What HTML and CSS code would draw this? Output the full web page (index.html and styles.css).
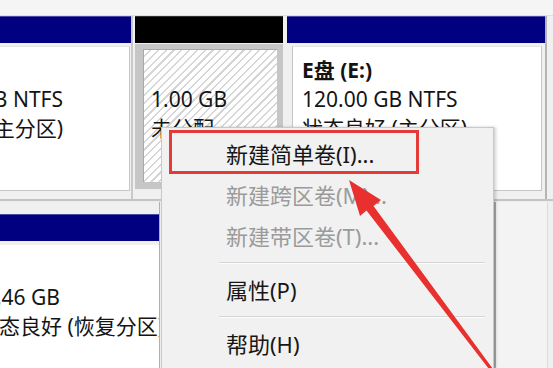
FILE: index.html
```html
<!DOCTYPE html>
<html lang="zh-CN">
<head>
    <meta charset="UTF-8">
    <title>磁盘管理</title>
    <link rel="stylesheet" href="styles.css">
</head>
<body>

    <div class="strip"></div>

    <!-- disk 0 -->
    <section class="row row-top">
        <div class="vol vol-a">
            <div class="bar navy"></div>
            <div class="box">
                <p class="line"></p>
                <p class="line cut">59.45 GB NTFS</p>
                <p class="line cut">状态良好 (主分区)</p>
            </div>
        </div>
        <div class="vol vol-b">
            <div class="bar black"></div>
            <div class="frame">
                <div class="hatch">
                    <p class="line">1.00 GB</p>
                    <p class="line">未分配</p>
                </div>
            </div>
        </div>
        <div class="vol vol-c">
            <div class="bar navy"></div>
            <div class="box">
                <p class="line bold">E盘 (E:)</p>
                <p class="line">120.00 GB NTFS</p>
                <p class="line">状态良好 (主分区)</p>
            </div>
        </div>
        <div class="vol-end"></div>
    </section>

    <!-- disk 1 -->
    <section class="row row-bot">
        <div class="vol vol-d">
            <div class="bar navy"></div>
            <div class="box">
                <p class="line cut-end">1.46 GB</p>
                <p class="line shift">状态良好 (恢复分区)</p>
            </div>
        </div>
        <div class="vol vol-e"></div>
        <div class="vol vol-f"></div>
    </section>

    <!-- context menu -->
    <div class="menu">
        <div class="menu-item">新建简单卷(I)...</div>
        <div class="menu-item off">新建跨区卷(M)...</div>
        <div class="menu-item off">新建带区卷(T)...</div>
        <div class="sep"></div>
        <div class="menu-item">属性(P)</div>
        <div class="sep"></div>
        <div class="menu-item">帮助(H)</div>
    </div>

    <!-- annotation -->
    <div class="mark"></div>
    <svg class="arrow" width="553" height="368" viewBox="0 0 553 368">
        <polygon points="349,180 381,200 373.5,206 493,369 490.5,371 366.5,210.5 360,216" fill="#e8312e"/>
    </svg>

</body>
</html>
```

FILE: styles.css
```css
body {
    margin: 0;
    width: 553px;
    height: 368px;
    overflow: hidden;
    position: relative;
    background-color: #f0f0f0;
    font-family: "Noto Sans", "Noto Sans CJK SC", sans-serif;
    color: #141414;
}

p {
    margin: 0;
}

.strip {
    height: 15px;
    background-color: #f5f5f5;
    border-bottom: 1px solid #e0e0e0;
}

.row {
    display: flex;
}

.row-top {
    height: 183px;
    border-bottom: 2px solid #c4c4c4;
}

.bar {
    height: 26px;
    border-top: 1px solid #4b4ba6;
}

.navy {
    background-color: #000080;
}

.black {
    background-color: #000;
    border-top-color: #333;
}

.line {
    height: 29px;
    line-height: 29px;
    font-size: 21px;
    white-space: nowrap;
}

.bold {
    font-weight: bold;
}

.box {
    background-color: #fff;
    border: 1px solid #c6c6c6;
    border-top-color: #e4e4e4;
}

/* disk 0 */

.vol-a {
    width: 131px;
    border-right: 2px solid #c9c9c9;
}

.vol-a .box {
    margin-top: 3px;
    height: 134px;
    padding-top: 9px;
    border-left: none;
    margin-right: 1px;
    overflow: hidden;
}

.cut {
    display: flex;
    justify-content: flex-end;
    width: 63px;
}

.vol-b {
    width: 148px;
    margin-left: 2px;
}

.frame {
    margin-top: 1px;
    height: 133px;
    padding: 5px 6px 7px 8px;
    background-color: #c6c6c6;
}

.hatch {
    height: 133px;
    padding: 35px 0 0 7px;
    box-sizing: border-box;
    border-top: 1px solid #a9a9a9;
    border-left: 1px solid #a9a9a9;
    background-color: #fff;
    background-image: repeating-linear-gradient(135deg, #fff 0, #fff 4px, #d6d6d6 4px, #d6d6d6 5.5px);
    overflow: hidden;
}

.vol-c {
    width: 258px;
    margin-left: 4px;
}

.vol-c .box {
    margin: 3px 3px 0 5px;
    height: 134px;
    padding: 9px 0 0 9px;
    overflow: hidden;
}

.vol-end {
    flex: 1;
    border-left: 2px solid #b4b4b4;
}

/* disk 1 */

.row-bot {
    height: 166px;
    border-top: 1px solid #ececec;
}

.vol-d {
    width: 159px;
    padding-top: 12px;
    border-right: 1px solid #b0b0b0;
}

.vol-d .box {
    margin-top: 4px;
    height: 85px;
    padding-top: 38px;
    border: none;
    overflow: hidden;
}

.cut-end {
    display: flex;
    justify-content: flex-end;
    width: 60px;
}

.shift {
    margin-left: -22px;
}

.vol-e {
    width: 334px;
}

.vol-f {
    flex: 1;
    border-left: 2px solid #a9a9a9;
    border-right: 5px solid #f0f0f0;
    background-color: #f3f3f3;
    box-shadow: inset -1px 0 0 #dcdcdc;
}

/* context menu */

.menu {
    position: absolute;
    left: 161px;
    top: 127px;
    width: 331px;
    height: 234px;
    padding-top: 6px;
    overflow: hidden;
    background-color: #f1f1f1;
    border: 1px solid #c8c8c8;
    border-bottom: none;
    box-shadow: 2px 0 3px rgba(0, 0, 0, 0.18);
}

.menu-item {
    height: 41px;
    line-height: 41px;
    padding-left: 64px;
    font-size: 22px;
    color: #161616;
}

.menu-item.off {
    color: #9b9b9b;
}

.sep {
    height: 1px;
    margin: 5px 8px 6px 57px;
    background-color: #d6d6d6;
    border-bottom: 1px solid #fbfbfb;
}

.mark {
    position: absolute;
    left: 169px;
    top: 130px;
    width: 250px;
    height: 44px;
    box-sizing: border-box;
    border: 3px solid #e33b38;
}

.arrow {
    position: absolute;
    left: 0;
    top: 0;
}
```
